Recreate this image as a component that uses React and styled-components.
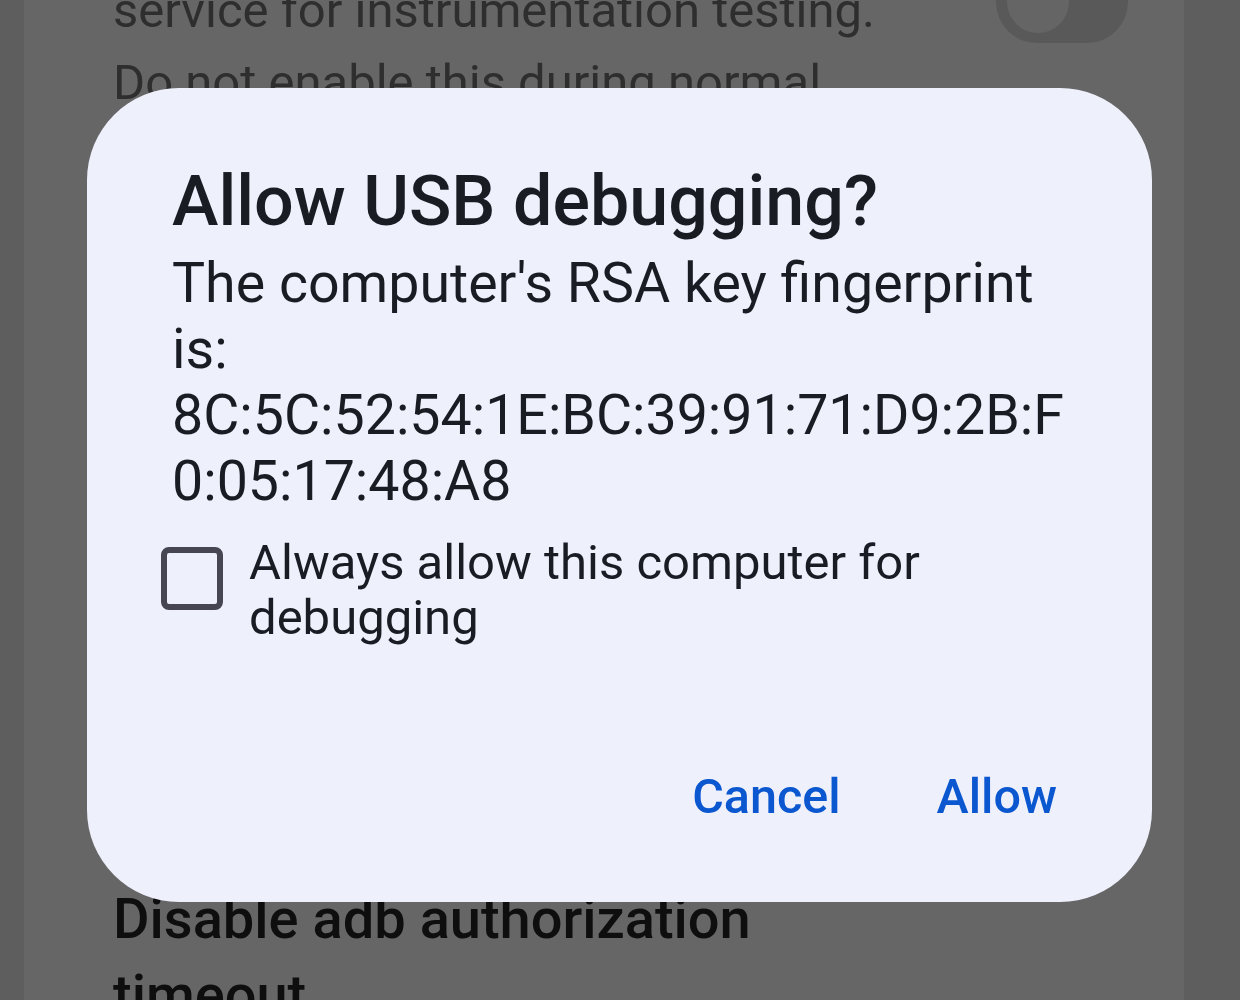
import React from "react";
import styled, { createGlobalStyle } from "styled-components";

const Global = createGlobalStyle`
  html, body { margin: 0; padding: 0; background: #5e5e5e; }
  body { font-family: Roboto, "Noto Sans", sans-serif; }
  * { box-sizing: border-box; }
`;

const Screen = styled.div`
  position: relative;
  width: 1240px;
  height: 1000px;
  overflow: hidden;
  background: #5e5e5e;
  padding: 0 56px 0 24px;
`;

const Panel = styled.div`
  height: 100%;
  background: #666666;
  padding: 0 56px 0 89px;
  display: flex;
  flex-direction: column;
`;

const SettingRow = styled.div`
  display: flex;
  align-items: flex-start;
  justify-content: space-between;
  margin-top: -39px;
`;

const BgText = styled.p`
  margin: 0;
  padding-top: 14px;
  font-size: 49px;
  line-height: 72px;
  color: #2e2e2e;
`;

const Toggle = styled.div`
  position: relative;
  flex: none;
  width: 132px;
  height: 82px;
  border-radius: 41px;
  background: #595959;
`;

const Thumb = styled.div`
  position: absolute;
  left: 11px;
  top: 10px;
  width: 62px;
  height: 62px;
  border-radius: 50%;
  background: #656565;
`;

const BgTitle = styled.p`
  margin: 762px 0 0;
  font-size: 56px;
  font-weight: 500;
  line-height: 76px;
  color: #0e0e0e;
`;

const Dialog = styled.div`
  position: absolute;
  left: 87px;
  top: 88px;
  width: 1065px;
  height: 814px;
  border-radius: 92px;
  background: #eef0fc;
  padding: 63px 82px 0 85px;
  display: flex;
  flex-direction: column;
  color: #1a1c24;
`;

const Title = styled.h1`
  margin: 0;
  font-size: 70px;
  font-weight: 500;
  line-height: 100px;
  color: #1a1c24;
`;

const Body = styled.p`
  margin: 0;
  font-size: 55.5px;
  line-height: 66px;
  color: #1a1c24;
`;

const Fingerprint = styled.span`
  word-break: break-all;
`;

const CheckRow = styled.label`
  display: flex;
  align-items: flex-start;
  gap: 26px;
  margin: 20px 0 0 -11px;
`;

const Box = styled.span`
  flex: none;
  width: 62px;
  height: 63px;
  margin-top: 12px;
  border: 6px solid #454652;
  border-radius: 8px;
`;

const CheckText = styled.span`
  font-size: 49px;
  line-height: 55px;
  color: #1a1c24;
`;

const Actions = styled.div`
  margin-top: auto;
  margin-bottom: 75px;
  display: flex;
  justify-content: flex-end;
  gap: 96px;
  padding-right: 13px;
`;

const TextButton = styled.button`
  border: 0;
  background: none;
  padding: 0;
  font-family: inherit;
  font-size: 48.5px;
  font-weight: 500;
  line-height: 60px;
  color: #0b57d0;
  cursor: pointer;
`;

export default function App() {
  return (
    <>
      <Global />
      <Screen>
        <Panel>
          <SettingRow>
            <BgText>
              service for instrumentation testing.
              <br />
              Do not enable this during normal
            </BgText>
            <Toggle>
              <Thumb />
            </Toggle>
          </SettingRow>
          <BgTitle>
            Disable adb authorization
            <br />
            timeout
          </BgTitle>
        </Panel>
        <Dialog role="dialog">
          <Title>Allow USB debugging?</Title>
          <Body>
            The computer's RSA key fingerprint is:
            <br />
            <Fingerprint>8C:5C:52:54:1E:BC:39:91:71:D9:2B:F0:05:17:48:A8</Fingerprint>
          </Body>
          <CheckRow>
            <Box />
            <CheckText>Always allow this computer for debugging</CheckText>
          </CheckRow>
          <Actions>
            <TextButton>Cancel</TextButton>
            <TextButton>Allow</TextButton>
          </Actions>
        </Dialog>
      </Screen>
    </>
  );
}
